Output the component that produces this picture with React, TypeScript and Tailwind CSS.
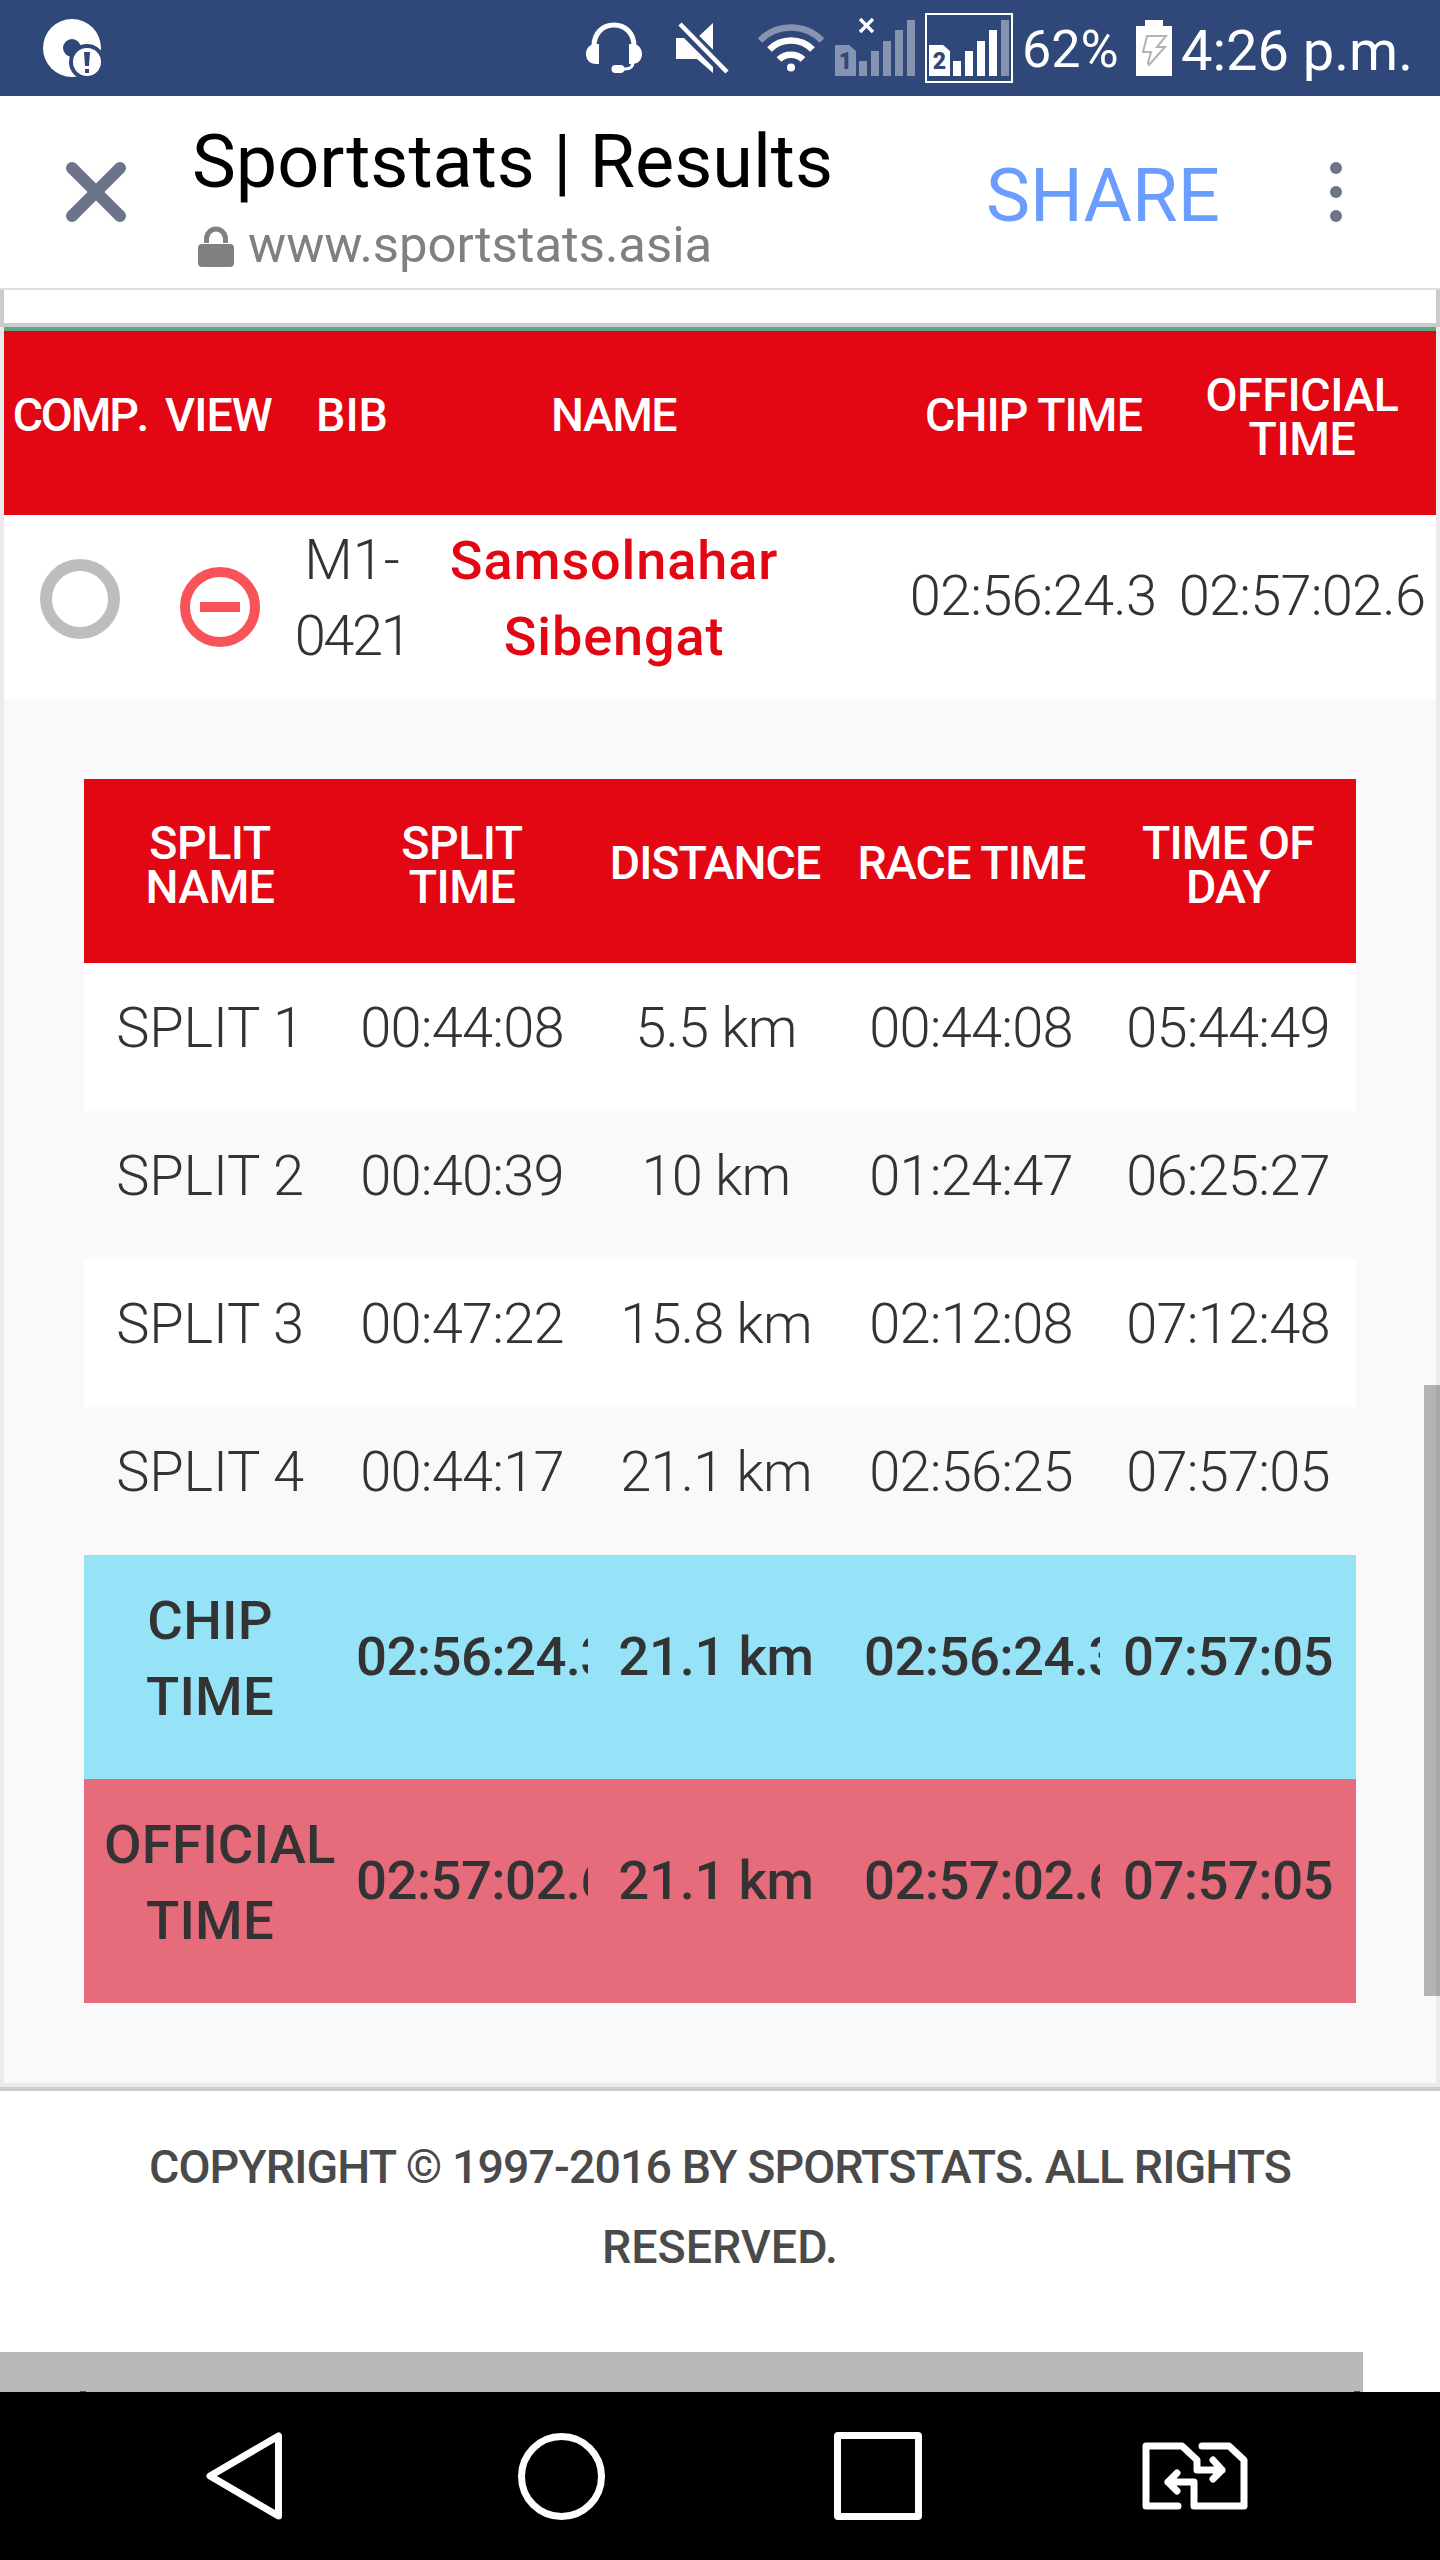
import clsx from "clsx";

const splits = [
  { name: "SPLIT 1", split: "00:44:08", distance: "5.5 km", race: "00:44:08", day: "05:44:49" },
  { name: "SPLIT 2", split: "00:40:39", distance: "10 km", race: "01:24:47", day: "06:25:27" },
  { name: "SPLIT 3", split: "00:47:22", distance: "15.8 km", race: "02:12:08", day: "07:12:48" },
  { name: "SPLIT 4", split: "00:44:17", distance: "21.1 km", race: "02:56:25", day: "07:57:05" },
];

const totals = [
  { name: "CHIP TIME", time: "02:56:24.3", distance: "21.1 km", day: "07:57:05", color: "bg-[#96e3f7]" },
  { name: "OFFICIAL TIME", time: "02:57:02.6", distance: "21.1 km", day: "07:57:05", color: "bg-[#e76c7b]" },
];

const bars = [
  { x: 24, y: 48 },
  { x: 36, y: 38 },
  { x: 48, y: 28 },
  { x: 60, y: 17 },
  { x: 72, y: 7 },
];

const SimSignal = ({ sim, active }: { sim: string; active: boolean }) => (
  <svg width="80" height="70" viewBox="0 0 80 70" className="shrink-0">
    <g fill="#fff" fillOpacity={active ? 1 : 0.42}>
      <path d="M0 32h14l7 6v25H0z" />
      {bars.map((bar, i) => (
        <rect
          key={bar.x}
          x={bar.x}
          y={bar.y}
          width="8"
          height={63 - bar.y}
          fillOpacity={active && i === 4 ? 0.42 : undefined}
        />
      ))}
    </g>
    <text x="10.5" y="56" textAnchor="middle" fontFamily="Roboto" fontWeight="900" fontSize="23" fill="#30477a">
      {sim}
    </text>
    {!active && <path d="M25 6l13 13M38 6L25 19" stroke="#fff" strokeWidth="3.4" />}
  </svg>
);

const StatusBar = () => (
  <div className="flex h-[96px] items-center bg-[#30477a] pl-[43px] text-white">
    <svg width="59" height="60" viewBox="0 0 59 60" className="shrink-0">
      <circle cx="29" cy="30" r="29" fill="#fff" />
      <circle cx="29" cy="30" r="9" fill="#30477a" />
      <circle cx="44" cy="44" r="18" fill="#30477a" />
      <circle cx="44" cy="44" r="14" fill="#fff" />
      <path d="M41 34h6l-1 14h-4zM42 51h4v4h-4z" fill="#30477a" />
    </svg>

    {/* Headset */}
    <svg width="56" height="52" viewBox="0 0 56 52" className="ml-[484px] shrink-0">
      <path d="M8 24C8 11 17 3 28 3s20 8 20 21" fill="none" stroke="#fff" strokeWidth="5" />
      <path d="M13 22v20h-3C4 42 0 38 0 32s4-10 10-10zM43 22v20h3c6 0 10-4 10-10s-4-10-10-10z" fill="#fff" />
      <path d="M47 40c0 5-3 7-8 7h-3" fill="none" stroke="#fff" strokeWidth="3" />
      <rect x="25.500" y="43" width="13" height="8" rx="4" fill="#fff" />
    </svg>

    {/* Muted speaker */}
    <svg width="54" height="54" viewBox="0 0 54 54" className="ml-[34px] shrink-0">
      <path d="M0 17h8l29 29v6L21 38H0zM37 2v29L22 16z" fill="#fff" />
      <path d="M5 3l46 46" stroke="#30477a" strokeWidth="9" />
      <path d="M4 3l47 48" stroke="#fff" strokeWidth="4.500" />
    </svg>

    {/* Wifi */}
    <svg width="68" height="52" viewBox="0 0 68 52" className="ml-[27px] shrink-0" fill="none" stroke="#fff">
      <path d="M3 18.500C20 1 48 1 65 18.500" strokeOpacity="0.42" strokeWidth="6.500" />
      <path d="M12.500 27.500C24 15.500 44 15.500 55.500 27.500" strokeWidth="6.500" />
      <path d="M22 37.500C28 31 40 31 46 37.500" strokeWidth="6.500" />
      <circle cx="34" cy="45.500" r="4" fill="#fff" stroke="none" />
    </svg>

    <div className="ml-[10px] flex h-[70px]">
      <SimSignal sim="1" active={false} />
    </div>
    <div className="ml-[10px] flex h-[70px] w-[88px] items-center justify-center border-2 border-white">
      <SimSignal sim="2" active />
    </div>

    <span className="ml-[9px] w-[114px] pt-[4px] text-[52px] leading-none">62%</span>
    <svg width="36" height="56" viewBox="0 0 36 56" className="shrink-0">
      <path d="M9 0h18v6h9v50H0V6h9z" fill="#fff" />
      <path d="M11 16h19l-9 11h8L13 45l-1-2 3-11H7z" fill="none" stroke="#b3b3b3" strokeWidth="2" />
    </svg>
    <span className="ml-[9px] whitespace-nowrap pt-[6px] text-[56px] leading-none">4:26 p.m.</span>
  </div>
);

const BrowserBar = () => (
  <div className="flex h-[194px] border-b-2 border-[#dfdfdf] bg-white">
    <svg width="62" height="62" viewBox="0 0 62 62" className="ml-[65px] mt-[65px] shrink-0">
      <path d="M7 7l48 48M55 7L7 55" stroke="#6b7487" strokeWidth="12" strokeLinecap="round" />
    </svg>
    <div className="ml-[65px] w-[790px] shrink-0">
      <h1 className="mt-[16px] whitespace-nowrap text-[73.8px] leading-[100px] text-black">Sportstats | Results</h1>
      <div className="mt-[3px] flex items-center text-[#808080]">
        <svg width="36" height="42" viewBox="0 0 36 42" className="ml-[6px] shrink-0">
          <path d="M8.500 17v-4a9.500 10 0 0 1 19 0v4" fill="none" stroke="currentColor" strokeWidth="5" />
          <rect y="18" width="36" height="23" rx="4" fill="currentColor" />
        </svg>
        <span className="ml-[14px] pb-[4px] text-[50.8px] leading-[60px]">www.sportstats.asia</span>
      </div>
    </div>
    <span className="ml-[4px] mt-[50px] text-[74.200px] leading-[100px] text-[#6b9dfe]">SHARE</span>
    <div className="ml-auto mr-[98px] mt-[66px] flex flex-col gap-[12px]">
      <span className="size-[12px] rounded-full bg-[#6b7487]" />
      <span className="size-[12px] rounded-full bg-[#6b7487]" />
      <span className="size-[12px] rounded-full bg-[#6b7487]" />
    </div>
  </div>
);

const HeadCell = ({ lines, className }: { lines: string[]; className?: string }) => (
  <div
    className={clsx(
      "flex flex-col items-center justify-center whitespace-nowrap",
      lines.length > 1 ? "pb-[12px]" : "pb-[16px]",
      className
    )}
  >
    {lines.map((line) => (
      <span key={line}>{line}</span>
    ))}
  </div>
);

const resultCols = "grid grid-cols-[152px_126px_140px_476px_272px_266px]";
const splitCols = "grid grid-cols-[254px_250px_256px_256px_256px]";
const headText = "h-[184px] bg-[#e30613] text-[46.5px] font-medium leading-[44px] text-white";

const SplitTable = () => (
  <div className="text-[#333]">
    <div className={clsx(splitCols, headText)}>
      <HeadCell lines={["SPLIT", "NAME"]} className="pr-[2px] tracking-[-0.5px]" />
      <HeadCell lines={["SPLIT", "TIME"]} className="pr-[2px] tracking-[-0.5px]" />
      <HeadCell lines={["DISTANCE"]} className="pr-[2px] tracking-[-1px]" />
      <HeadCell lines={["RACE TIME"]} className="pr-[1px] tracking-[-0.8px]" />
      <HeadCell lines={["TIME OF", "DAY"]} className="tracking-[-0.8px]" />
    </div>

    {splits.map((row, i) => (
      <div
        key={row.name}
        className={clsx(
          splitCols,
          "h-[148px] items-center justify-items-center pb-[19px] text-[56px] font-[350] leading-[76px] tracking-[-0.8px]",
          i % 2 === 0 ? "bg-white" : "bg-[#f9f9f9]"
        )}
      >
        <span className="pr-[2px] tracking-[-0.1px]">{row.name}</span>
        <span className="pr-[2px]">{row.split}</span>
        <span>{row.distance}</span>
        <span className="pr-[2px]">{row.race}</span>
        <span>{row.day}</span>
      </div>
    ))}

    {totals.map((row) => (
      <div
        key={row.name}
        className={clsx(
          splitCols,
          "h-[224px] items-center pb-[20px] text-center text-[54.5px] font-medium leading-[76px] tracking-[-0.6px]",
          row.color
        )}
      >
        <span className="pl-[20px] pr-[22px] pt-[2px] tracking-[0.2px]">{row.name}</span>
        <span className="overflow-hidden pb-[3px] pl-[18px] text-left">{row.time}</span>
        <span className="pb-[3px] tracking-[-0.3px]">{row.distance}</span>
        <span className="overflow-hidden pb-[3px] pl-[20px] text-left">{row.time}</span>
        <span className="pb-[3px]">{row.day}</span>
      </div>
    ))}
  </div>
);

const Results = () => (
  <main>
    <div className="h-[37px] border-x-4 border-b-4 border-[#ccc] bg-white" />

    <div className="border-x-4 border-b-4 border-[#ebebeb]">
      <div className="h-1 bg-[#5ba88b]" />
      <div className={clsx(resultCols, headText)}>
        <HeadCell lines={["COMP."]} className="tracking-[-2.2px] [font-kerning:none]" />
        <HeadCell lines={["VIEW"]} className="pr-[1px] tracking-[-0.9px]" />
        <HeadCell lines={["BIB"]} />
        <HeadCell lines={["NAME"]} className="pr-[93px] tracking-[-1.6px]" />
        <HeadCell lines={["CHIP TIME"]} className="pr-[1px] tracking-[-0.9px]" />
        <HeadCell lines={["OFFICIAL", "TIME"]} className="pr-[2px] tracking-[-0.4px]" />
      </div>

      {/* Athlete row */}
      <div className={clsx(resultCols, "h-[184px] items-center justify-items-center bg-white text-center text-[56px] font-[350] leading-[76px] text-[#333]")}>
        <span className="mb-[16px] size-[80px] rounded-full border-12 border-[#bdbdbd]" />
        <svg width="80" height="80" viewBox="0 0 80 80" className="ml-[2px]">
          <circle cx="40" cy="40" r="35" fill="none" stroke="#f85359" strokeWidth="10" />
          <rect x="20" y="35" width="40" height="10" fill="#f85359" />
        </svg>
        <span className="pb-[18px]">
          M1-
          <br />
          <span className="tracking-[-2.4px]">0421</span>
        </span>
        <a className="pb-[17px] pr-[92px] text-[54px] font-medium tracking-[0.9px] text-[#e30613]">
          Samsolnahar
          <br />
          Sibengat
        </a>
        <span className="pb-[22px] pr-[2px] tracking-[-0.8px]">02:56:24.3</span>
        <span className="pb-[22px] pr-[2px] tracking-[-0.8px]">02:57:02.6</span>
      </div>

      {/* Expanded splits */}
      <div className="bg-[#f9f9f9] p-[80px]">
        <SplitTable />
      </div>
    </div>
  </main>
);

const Footer = () => (
  <footer className="flex h-[305px] flex-col border-t-4 border-[#ccc] bg-white">
    <p className="pt-[36px] text-center text-[46.5px] font-medium leading-[80px] text-[#4a4a4a]">
      <span className="tracking-[-0.9px]">COPYRIGHT © 1997-2016 BY SPORTSTATS. ALL RIGHTS</span>
      <br />
      RESERVED.
    </p>
    <div className="mt-auto flex h-[40px] w-[1363px] items-end justify-between bg-[#b8b8b8] pl-[80px] pr-[3px]">
      <span className="h-px w-[6px] bg-[#1c5f9e]" />
      <span className="h-px w-[6px] bg-[#1c5f9e]" />
    </div>
  </footer>
);

const NavBar = () => (
  <nav className="flex h-[168px] items-center bg-black">
    <svg width="80" height="90" viewBox="0 0 80 90" className="ml-[204px]" fill="none" stroke="#fff" strokeWidth="7" strokeLinejoin="round">
      <path d="M74.500 5v80L6 45z" />
    </svg>
    <span className="ml-[234px] size-[87px] rounded-full border-[7px] border-white" />
    <span className="ml-[229px] size-[88px] rounded-[4px] border-[7px] border-white" />
    <svg
      width="106"
      height="68"
      viewBox="0 0 106 68"
      className="ml-[220px]"
      fill="none"
      stroke="#fff"
      strokeWidth="7"
      strokeLinecap="round"
      strokeLinejoin="round"
    >
      <path d="M36 64H4V4h36l15 14v10h25M71 18l9 10-9 9" />
      <path d="M60 4h27l15 14v46H52V40H26M35 31l-9 9 9 9" />
    </svg>
  </nav>
);

const App = () => {
  return (
    <div className="relative h-[2560px] w-[1440px] overflow-hidden bg-white font-['Roboto',sans-serif]">
      <StatusBar />
      <BrowserBar />
      <Results />
      <Footer />
      <NavBar />
      {/* Scroll thumb */}
      <div className="absolute right-0 top-[1385px] h-[611px] w-[16px] bg-black/28" />
    </div>
  );
};

export default App;
